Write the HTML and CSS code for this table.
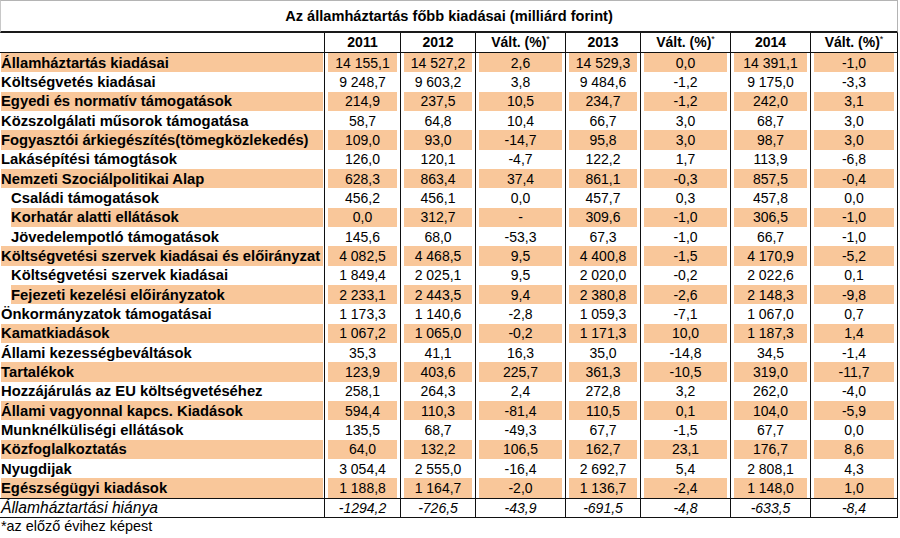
FILE: index.html
```html
<!DOCTYPE html>
<html lang="hu">
<head>
<meta charset="utf-8">
<title>Az államháztartás főbb kiadásai</title>
<link rel="stylesheet" href="styles.css">
</head>
<body>
<div class="sheet">
  <div class="title">Az államháztartás főbb kiadásai (milliárd forint)</div>
  <table class="grid">
    <colgroup>
      <col class="c-label"><col class="c-y1"><col class="c-y2"><col class="c-ch1"><col class="c-y3"><col class="c-ch2"><col class="c-y4"><col class="c-ch3">
    </colgroup>
    <thead>
      <tr>
        <th class="lab"></th><th>2011</th><th>2012</th><th>Vált. (%)<sup>*</sup></th><th>2013</th><th>Vált. (%)<sup>*</sup></th><th>2014</th><th class="last">Vált. (%)<sup>*</sup></th>
      </tr>
    </thead>
    <tbody>
      <tr class="o"><td class="lab">Államháztartás kiadásai</td><td>14 155,1</td><td>14 527,2</td><td>2,6</td><td>14 529,3</td><td>0,0</td><td>14 391,1</td><td class="last">-1,0</td></tr>
      <tr><td class="lab">Költségvetés kiadásai</td><td>9 248,7</td><td>9 603,2</td><td>3,8</td><td>9 484,6</td><td>-1,2</td><td>9 175,0</td><td class="last">-3,3</td></tr>
      <tr class="o"><td class="lab">Egyedi és normatív támogatások</td><td>214,9</td><td>237,5</td><td>10,5</td><td>234,7</td><td>-1,2</td><td>242,0</td><td class="last">3,1</td></tr>
      <tr><td class="lab">Közszolgálati műsorok támogatása</td><td>58,7</td><td>64,8</td><td>10,4</td><td>66,7</td><td>3,0</td><td>68,7</td><td class="last">3,0</td></tr>
      <tr class="o"><td class="lab">Fogyasztói árkiegészítés(tömegközlekedés)</td><td>109,0</td><td>93,0</td><td>-14,7</td><td>95,8</td><td>3,0</td><td>98,7</td><td class="last">3,0</td></tr>
      <tr><td class="lab">Lakásépítési támogtások</td><td>126,0</td><td>120,1</td><td>-4,7</td><td>122,2</td><td>1,7</td><td>113,9</td><td class="last">-6,8</td></tr>
      <tr class="o"><td class="lab">Nemzeti Szociálpolitikai Alap</td><td>628,3</td><td>863,4</td><td>37,4</td><td>861,1</td><td>-0,3</td><td>857,5</td><td class="last">-0,4</td></tr>
      <tr><td class="lab sub">Családi támogatások</td><td>456,2</td><td>456,1</td><td>0,0</td><td>457,7</td><td>0,3</td><td>457,8</td><td class="last">0,0</td></tr>
      <tr class="o"><td class="lab sub">Korhatár alatti ellátások</td><td>0,0</td><td>312,7</td><td>-</td><td>309,6</td><td>-1,0</td><td>306,5</td><td class="last">-1,0</td></tr>
      <tr><td class="lab sub">Jövedelempotló támogatások</td><td>145,6</td><td>68,0</td><td>-53,3</td><td>67,3</td><td>-1,0</td><td>66,7</td><td class="last">-1,0</td></tr>
      <tr class="o"><td class="lab">Költségvetési szervek kiadásai és előirányzat</td><td>4 082,5</td><td>4 468,5</td><td>9,5</td><td>4 400,8</td><td>-1,5</td><td>4 170,9</td><td class="last">-5,2</td></tr>
      <tr><td class="lab sub">Költségvetési szervek kiadásai</td><td>1 849,4</td><td>2 025,1</td><td>9,5</td><td>2 020,0</td><td>-0,2</td><td>2 022,6</td><td class="last">0,1</td></tr>
      <tr class="o"><td class="lab sub">Fejezeti kezelési előirányzatok</td><td>2 233,1</td><td>2 443,5</td><td>9,4</td><td>2 380,8</td><td>-2,6</td><td>2 148,3</td><td class="last">-9,8</td></tr>
      <tr><td class="lab">Önkormányzatok támogatásai</td><td>1 173,3</td><td>1 140,6</td><td>-2,8</td><td>1 059,3</td><td>-7,1</td><td>1 067,0</td><td class="last">0,7</td></tr>
      <tr class="o"><td class="lab">Kamatkiadások</td><td>1 067,2</td><td>1 065,0</td><td>-0,2</td><td>1 171,3</td><td>10,0</td><td>1 187,3</td><td class="last">1,4</td></tr>
      <tr><td class="lab">Állami kezességbeváltások</td><td>35,3</td><td>41,1</td><td>16,3</td><td>35,0</td><td>-14,8</td><td>34,5</td><td class="last">-1,4</td></tr>
      <tr class="o"><td class="lab">Tartalékok</td><td>123,9</td><td>403,6</td><td>225,7</td><td>361,3</td><td>-10,5</td><td>319,0</td><td class="last">-11,7</td></tr>
      <tr><td class="lab">Hozzájárulás az EU költségvetéséhez</td><td>258,1</td><td>264,3</td><td>2,4</td><td>272,8</td><td>3,2</td><td>262,0</td><td class="last">-4,0</td></tr>
      <tr class="o"><td class="lab">Állami vagyonnal kapcs. Kiadások</td><td>594,4</td><td>110,3</td><td>-81,4</td><td>110,5</td><td>0,1</td><td>104,0</td><td class="last">-5,9</td></tr>
      <tr><td class="lab">Munknélküliségi ellátások</td><td>135,5</td><td>68,7</td><td>-49,3</td><td>67,7</td><td>-1,5</td><td>67,7</td><td class="last">0,0</td></tr>
      <tr class="o"><td class="lab">Közfoglalkoztatás</td><td>64,0</td><td>132,2</td><td>106,5</td><td>162,7</td><td>23,1</td><td>176,7</td><td class="last">8,6</td></tr>
      <tr><td class="lab">Nyugdijak</td><td>3 054,4</td><td>2 555,0</td><td>-16,4</td><td>2 692,7</td><td>5,4</td><td>2 808,1</td><td class="last">4,3</td></tr>
      <tr class="o"><td class="lab">Egészségügyi kiadások</td><td>1 188,8</td><td>1 164,7</td><td>-2,0</td><td>1 136,7</td><td>-2,4</td><td>1 148,0</td><td class="last">1,0</td></tr>
      <tr class="total"><td class="lab">Államháztartási hiánya</td><td>-1294,2</td><td>-726,5</td><td>-43,9</td><td>-691,5</td><td>-4,8</td><td>-633,5</td><td class="last">-8,4</td></tr>
    </tbody>
  </table>
  <div class="note">*az előző évihez képest</div>
</div>
</body>
</html>
```
FILE: styles.css
```css
html, body {
  margin: 0;
  padding: 0;
  background: #ffffff;
}
body {
  font-family: "Liberation Sans", Arial, sans-serif;
  color: #000;
}
.sheet {
  width: 898px;
}
.title {
  box-sizing: border-box;
  height: 33px;
  border-top: 1px solid #b4b4b4;
  border-left: 1px solid #c8c8c8;
  border-right: 1px solid #b4b4b4;
  border-bottom: 2px solid #1a1a1a;
  font-weight: bold;
  font-size: 14.6px;
  line-height: 30px;
  text-align: center;
}
.grid {
  width: 898px;
  table-layout: fixed;
  border-collapse: separate;
  border-spacing: 0;
}
.c-label { width: 324px; }
.c-y1 { width: 76px; }
.c-y2 { width: 75px; }
.c-ch1 { width: 90px; }
.c-y3 { width: 75px; }
.c-ch2 { width: 90px; }
.c-y4 { width: 80px; }
.c-ch3 { width: 88px; }

.grid th, .grid td {
  padding: 0 3px;
  border-left: 1px solid #111;
  text-align: center;
  white-space: nowrap;
  overflow: hidden;
  background-clip: content-box;
  vertical-align: middle;
}
.grid th {
  height: 19px;
  font-weight: bold;
  font-size: 14px;
  border-bottom: 1px solid #111;
  line-height: 19px;
}
.grid th sup {
  font-size: 9px;
  font-weight: normal;
  vertical-align: 5px;
  line-height: 0;
}
.grid td {
  height: 19.33px;
  font-size: 14px;
  line-height: 18px;
}
.grid .lab {
  border-left: none;
  text-align: left;
  padding: 0 1px 0 1px;
  font-weight: bold;
  font-size: 14.8px;
  text-overflow: clip;
}
.grid .lab.sub {
  padding-left: 11px;
}
.grid .last {
  border-right: 1px solid #111;
}
.grid tr.o td {
  background-color: #f9c79a;
}
.grid tr.total td {
  font-style: italic;
  border-top: 1px solid #111;
  border-bottom: 1px solid #111;
  height: 17px;
}
.grid tr.total td.lab {
  font-weight: normal;
  font-size: 15.6px;
}
.note {
  font-size: 14.4px;
  line-height: 17px;
  padding-left: 1px;
}
```
